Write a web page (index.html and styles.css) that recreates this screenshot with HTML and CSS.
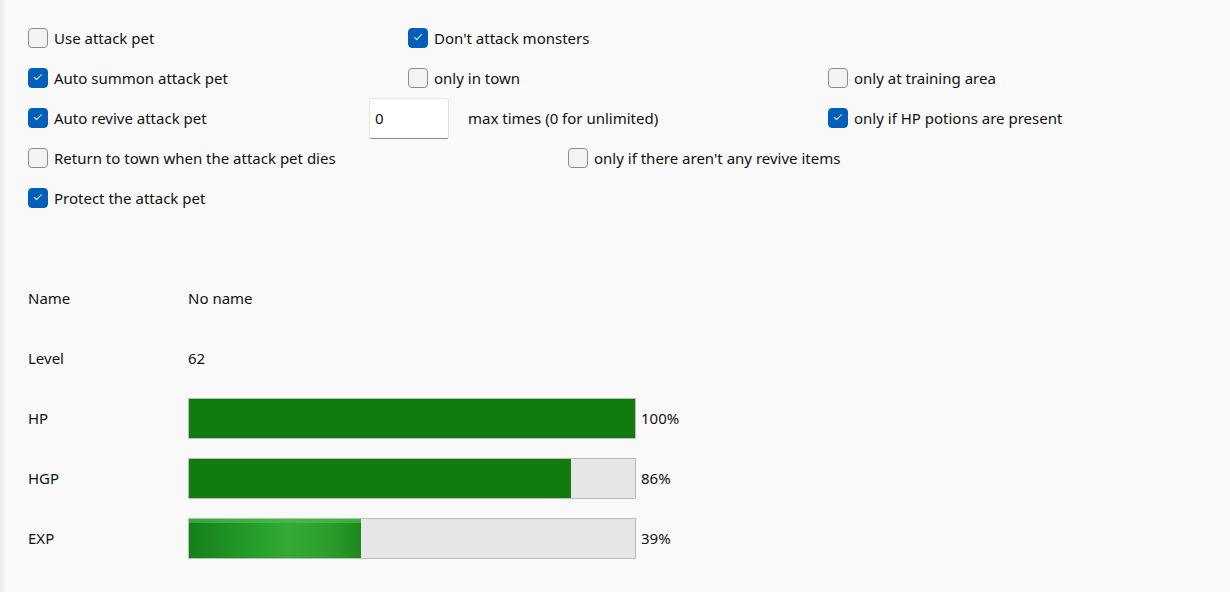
FILE: index.html
```html
<!DOCTYPE html>
<html>
<head>
<meta charset="utf-8">
<link rel="stylesheet" href="styles.css">
</head>
<body>
<div class="page">
  <div class="options">
    <div class="row">
      <label class="cell w380"><span class="cb"></span><span>Use attack pet</span></label>
      <label class="cell"><span class="cb on"></span><span>Don't attack monsters</span></label>
    </div>
    <div class="row">
      <label class="cell w380"><span class="cb on"></span><span>Auto summon attack pet</span></label>
      <label class="cell w420"><span class="cb"></span><span>only in town</span></label>
      <label class="cell"><span class="cb"></span><span>only at training area</span></label>
    </div>
    <div class="row">
      <label class="cell w341"><span class="cb on"></span><span>Auto revive attack pet</span></label>
      <div class="cell w459">
        <span class="input">0</span>
        <span class="maxtext">max times (0 for unlimited)</span>
      </div>
      <label class="cell"><span class="cb on"></span><span>only if HP potions are present</span></label>
    </div>
    <div class="row">
      <label class="cell w540"><span class="cb"></span><span>Return to town when the attack pet dies</span></label>
      <label class="cell"><span class="cb"></span><span>only if there aren't any revive items</span></label>
    </div>
    <div class="row">
      <label class="cell"><span class="cb on"></span><span>Protect the attack pet</span></label>
    </div>
  </div>

  <div class="stats">
    <div class="srow"><span class="slabel">Name</span><span>No name</span></div>
    <div class="srow"><span class="slabel">Level</span><span>62</span></div>
    <div class="srow"><span class="slabel">HP</span><div class="bar"><div class="fill" style="width:100%"></div></div><span class="pct">100%</span></div>
    <div class="srow"><span class="slabel">HGP</span><div class="bar"><div class="fill" style="width:85.7%"></div></div><span class="pct">86%</span></div>
    <div class="srow"><span class="slabel">EXP</span><div class="bar"><div class="fill anim" style="width:38.6%"></div></div><span class="pct">39%</span></div>
  </div>
</div>
</body>
</html>
```

FILE: styles.css
```css
html, body {
  margin: 0;
  padding: 0;
  background: #f9f9f9;
}
body {
  font-family: "Noto Sans", "Liberation Sans", sans-serif;
  font-size: 15px;
  color: #111111;
  width: 1230px;
  height: 592px;
  overflow: hidden;
}
.page {
  height: 592px;
  border-left: 4px solid #eeeeee;
  box-sizing: border-box;
  padding-left: 24px;
}
.options {
  padding-top: 18px;
  display: flex;
  flex-direction: column;
}
.row {
  display: flex;
  align-items: center;
  height: 40px;
}
.cell {
  display: flex;
  align-items: center;
  flex: none;
}
.w380 { width: 380px; }
.w420 { width: 420px; }
.w341 { width: 341px; }
.w459 { width: 459px; }
.w540 { width: 540px; }
.cb {
  width: 18px;
  height: 18px;
  border: 1px solid #8a8a8a;
  border-radius: 4px;
  background: #f3f3f3;
  margin-right: 6px;
  flex: none;
  position: relative;
}
.cb.on {
  background: #005fb8;
  border-color: #005fb8;
}
.cb.on::after {
  content: "";
  position: absolute;
  left: 5px;
  top: 5px;
  width: 7px;
  height: 3px;
  border-left: 1.3px solid #fff;
  border-bottom: 1.3px solid #fff;
  transform: rotate(-45deg);
}
.input {
  width: 80px;
  height: 41px;
  box-sizing: border-box;
  background: #ffffff;
  border: 1px solid #e5e5e5;
  border-bottom-color: #868686;
  border-radius: 3px;
  display: flex;
  align-items: center;
  padding-left: 5px;
}
.maxtext {
  margin-left: 19px;
}
.stats {
  padding-top: 50px;
  display: flex;
  flex-direction: column;
}
.srow {
  display: flex;
  align-items: center;
  height: 60px;
}
.slabel {
  width: 160px;
  flex: none;
}
.bar {
  width: 448px;
  height: 41px;
  box-sizing: border-box;
  border: 1px solid #bcbcbc;
  background: #e6e6e6;
  flex: none;
}
.fill {
  height: 100%;
  background: #107c10;
}
.fill.anim {
  background:
    linear-gradient(to bottom, rgba(80, 200, 80, 0.55) 0, rgba(80, 200, 80, 0.55) 4px, transparent 4px),
    linear-gradient(to right, #15801a 0%, #27a02c 40%, #36aa36 58%, #2c9e2c 80%, #1c8a1c 100%);
}
.pct {
  margin-left: 5px;
}
```
